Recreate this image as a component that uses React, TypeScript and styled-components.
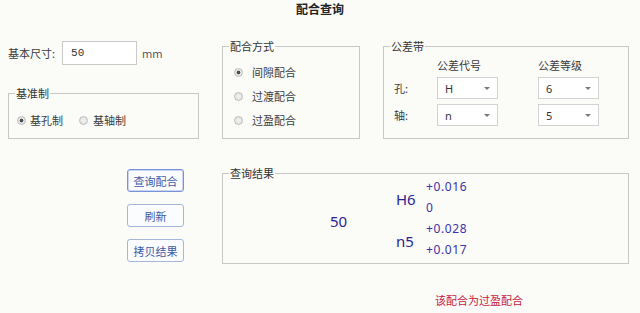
import React from "react";
import styled, { createGlobalStyle, css } from "styled-components";

const Global = createGlobalStyle`
  html, body { margin: 0; padding: 0; background: #fbfbf8; }
  body { font-family: "Noto Sans CJK SC", "Noto Sans", sans-serif; color: #3a3a3a; }
  * { box-sizing: border-box; }
`;

const Page = styled.div`
  width: 640px;
  height: 313px;
  overflow: hidden;
  background: #fbfbf8;
  font-size: 11px;
`;

const Title = styled.h1`
  margin: 0 0 22px;
  height: 18px;
  line-height: 18px;
  text-align: center;
  font-size: 12px;
  font-weight: 700;
  color: #222;
`;

const MainGrid = styled.div`
  display: grid;
  grid-template-columns: 191px 138px 246px;
  column-gap: 23px;
  row-gap: 28px;
  padding-left: 8px;
  align-items: start;
`;

const LeftColumn = styled.div`
  display: flex;
  flex-direction: column;
  gap: 22px;
  padding-top: 1px;
`;

const SizeRow = styled.div`
  display: flex;
  align-items: center;
  height: 24px;
`;

const Label = styled.span`
  font-size: 11px;
  line-height: 14px;
  color: #3c3c3c;
  white-space: nowrap;
`;

const SizeInput = styled.input`
  width: 75px;
  height: 24px;
  margin: 0 5px 0 7px;
  padding: 0 0 0 8px;
  border: 1px solid #cacaca;
  background: #fff;
  font-family: "Liberation Mono", "DejaVu Sans Mono", monospace;
  font-size: 11px;
  color: #333;
  outline: none;
`;

const Unit = styled.span`
  font-family: "Noto Sans", sans-serif;
  font-size: 11px;
  color: #555;
`;

const Group = styled.fieldset<{ $span?: boolean }>`
  margin: 0;
  padding: 0;
  min-width: 0;
  border: 1px solid #c8c8c8;
  ${(p) => p.$span && css`grid-column: 2 / span 2;`}
`;

const Legend = styled.legend`
  margin-left: 6px;
  padding: 0 1px;
  font-size: 11px;
  line-height: 13px;
  color: #333;
`;

const RadioColumn = styled.div<{ $pad: number }>`
  display: flex;
  flex-direction: column;
  gap: 8px;
  padding: 11px 0 10px ${(p) => p.$pad}px;
`;

const RadioRowH = styled.div`
  display: flex;
  gap: 0;
  padding: 12px 0 10px 8px;
`;

const RadioLabel = styled.label<{ $gap: number; $after?: number }>`
  display: flex;
  align-items: center;
  gap: ${(p) => p.$gap}px;
  height: 16px;
  margin-right: ${(p) => p.$after ?? 0}px;
  font-size: 11px;
  color: #3c3c3c;
`;

const Radio = styled.input.attrs({ type: "radio" })`
  appearance: none;
  margin: 0;
  width: 9px;
  height: 9px;
  border-radius: 50%;
  border: 1px solid #bdbdbd;
  background: radial-gradient(circle at 50% 50%, #f2f2f2 0, #dedede 100%);
  position: relative;
  &:checked {
    background: radial-gradient(circle at 50% 50%, #4d4d4d 0, #4d4d4d 1.6px, #ececec 2.2px, #d8d8d8 100%);
  }
`;

const TolGrid = styled.div`
  display: grid;
  grid-template-columns: 43px 61px 61px;
  column-gap: 0;
  grid-template-rows: 14px 22px 22px;
  row-gap: 5px;
  padding: 5px 0 12px 10px;
  align-items: center;
  & > :nth-child(3n) { margin-left: 40px; }
`;

const TolGridFix = styled(TolGrid)`
  grid-template-columns: 43px 61px 101px;
  & > :nth-child(3n) { margin-left: 40px; width: 61px; }
`;

const Combo = styled.div`
  display: flex;
  align-items: center;
  justify-content: space-between;
  height: 22px;
  padding: 0 7px 0 7px;
  border: 1px solid #d2d2d2;
  background: #fff;
  font-family: "Noto Sans", sans-serif;
  font-size: 11px;
  color: #333;
`;

const Caret = styled.span`
  width: 0;
  height: 0;
  border-left: 3px solid transparent;
  border-right: 3px solid transparent;
  border-top: 3px solid #7a7a7a;
`;

const ButtonColumn = styled.div`
  display: flex;
  flex-direction: column;
  gap: 12px;
  padding-top: 2px;
  justify-self: end;
  margin-right: 15px;
`;

const Button = styled.button<{ $focused?: boolean }>`
  width: 57px;
  height: 23px;
  padding: 0;
  border: 1px solid #a6b6da;
  border-radius: 3px;
  background: #fbfcfe;
  font-family: "Noto Sans CJK SC", sans-serif;
  font-size: 11px;
  color: #3d5aa6;
  cursor: pointer;
  ${(p) =>
    p.$focused &&
    css`
      border-color: #7893db;
      box-shadow: inset 0 0 0 1px #c9d5f3;
    `}
`;

const ResultGrid = styled.div`
  display: grid;
  grid-template-columns: 66px 30px auto;
  grid-template-rows: repeat(4, 21px);
  margin-top: -4px;
  padding: 0 0 3px 107px;
  align-items: center;
`;

const Nominal = styled.div`
  grid-row: 1 / span 4;
  grid-column: 1;
  padding-top: 6px;
  font-family: "Noto Sans", sans-serif;
  font-size: 15px;
  color: #2b2490;
`;

const Designation = styled.div<{ $row: number }>`
  grid-row: ${(p) => p.$row} / span 2;
  grid-column: 2;
  padding-top: 4px;
  font-family: "Noto Sans", sans-serif;
  font-size: 15px;
  color: #2b2490;
`;

const Deviation = styled.div`
  grid-column: 3;
  font-family: "Noto Sans", sans-serif;
  font-size: 12px;
  letter-spacing: 0.6px;
  color: #3b33a6;
`;

const Message = styled.div`
  margin: 29px 0 0 435px;
  font-size: 11px;
  line-height: 14px;
  color: #c8183e;
`;

export default function App() {
  return (
    <Page>
      <Global />
      <Title>配合查询</Title>
      <MainGrid>
        <LeftColumn>
          <SizeRow>
            <Label>基本尺寸:</Label>
            <SizeInput defaultValue="50" />
            <Unit>mm</Unit>
          </SizeRow>
          <Group>
            <Legend>基准制</Legend>
            <RadioRowH>
              <RadioLabel $gap={4} $after={16}>
                <Radio name="base" defaultChecked />
                基孔制
              </RadioLabel>
              <RadioLabel $gap={5}>
                <Radio name="base" />
                基轴制
              </RadioLabel>
            </RadioRowH>
          </Group>
        </LeftColumn>

        <Group>
          <Legend>配合方式</Legend>
          <RadioColumn $pad={11}>
            <RadioLabel $gap={9}>
              <Radio name="fit" defaultChecked />
              间隙配合
            </RadioLabel>
            <RadioLabel $gap={9}>
              <Radio name="fit" />
              过渡配合
            </RadioLabel>
            <RadioLabel $gap={9}>
              <Radio name="fit" />
              过盈配合
            </RadioLabel>
          </RadioColumn>
        </Group>

        <Group>
          <Legend>公差带</Legend>
          <TolGridFix>
            <span />
            <Label>公差代号</Label>
            <Label>公差等级</Label>
            <Label>孔:</Label>
            <Combo>
              H<Caret />
            </Combo>
            <Combo>
              6<Caret />
            </Combo>
            <Label>轴:</Label>
            <Combo>
              n<Caret />
            </Combo>
            <Combo>
              5<Caret />
            </Combo>
          </TolGridFix>
        </Group>

        <ButtonColumn>
          <Button $focused>查询配合</Button>
          <Button>刷新</Button>
          <Button>拷贝结果</Button>
        </ButtonColumn>

        <Group $span>
          <Legend>查询结果</Legend>
          <ResultGrid>
            <Nominal>50</Nominal>
            <Designation $row={1}>H6</Designation>
            <Deviation style={{ gridRow: 1 }}>+0.016</Deviation>
            <Deviation style={{ gridRow: 2 }}>0</Deviation>
            <Designation $row={3}>n5</Designation>
            <Deviation style={{ gridRow: 3 }}>+0.028</Deviation>
            <Deviation style={{ gridRow: 4 }}>+0.017</Deviation>
          </ResultGrid>
        </Group>
      </MainGrid>
      <Message>该配合为过盈配合</Message>
    </Page>
  );
}
